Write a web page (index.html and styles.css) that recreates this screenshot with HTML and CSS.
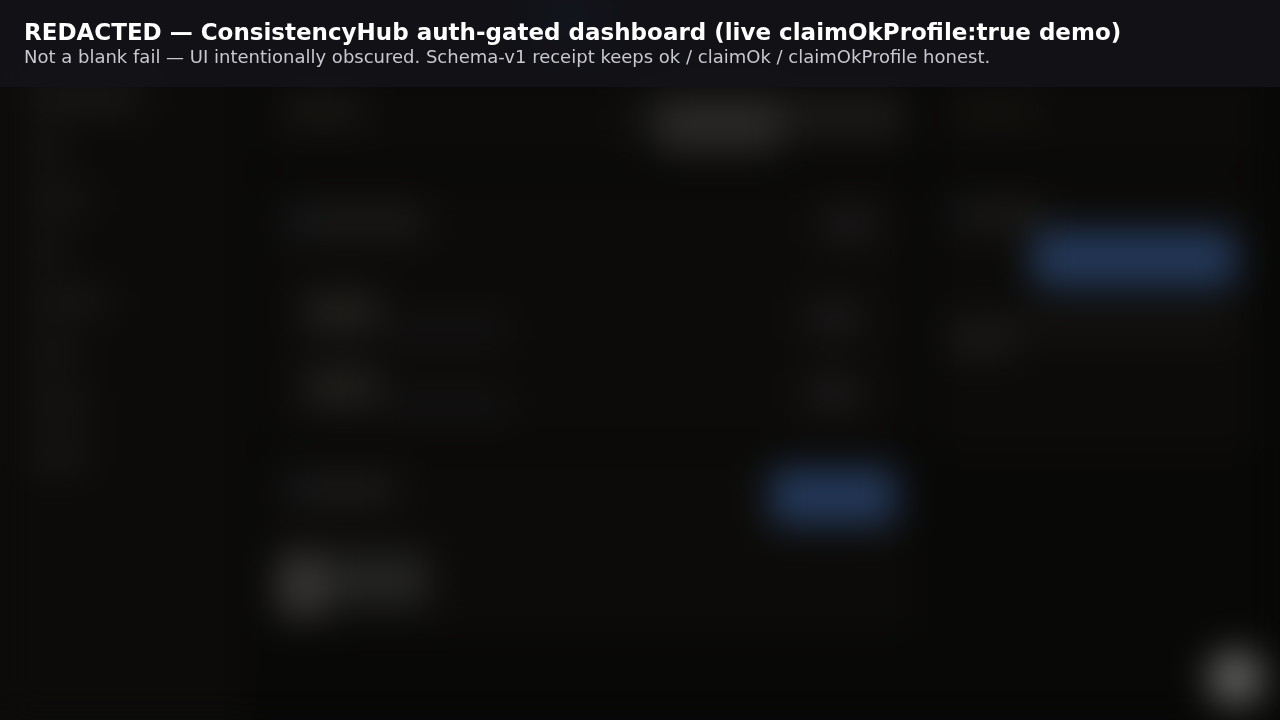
FILE: index.html
```html
<!DOCTYPE html>
<html lang="en">
<head>
<meta charset="utf-8">
<meta name="viewport" content="width=device-width, initial-scale=1">
<title>ConsistencyHub</title>
<link rel="stylesheet" href="styles.css">
</head>
<body>
<header class="banner">
  <h1 class="banner-title">REDACTED — ConsistencyHub auth-gated dashboard (live claimOkProfile:true demo)</h1>
  <p class="banner-note">Not a blank fail — UI intentionally obscured. Schema-v1 receipt keeps ok / claimOk / claimOkProfile honest.</p>
</header>
<div class="dashboard" aria-hidden="true" inert>
  <aside class="sidebar">
    <span class="bar brand"></span>
    <span class="bar w-s"></span>
    <span class="bar w-l"></span>
    <span class="bar w-s"></span>
    <span class="bar w-xl"></span>
    <span class="bar w-m"></span>
    <span class="bar w-l"></span>
    <span class="bar w-l"></span>
  </aside>
  <main class="main">
    <div class="topbar"><span class="spark"></span></div>
    <div class="columns">
      <div class="column">
        <section class="card summary">
          <span class="bar label"></span>
          <div class="stat"><span class="stat-lead"></span><span class="stat-main"></span><span class="stat-side"></span></div>
        </section>
        <section class="card list">
          <div class="row heading-row"><span class="heading"></span><span class="tag"></span></div>
          <div class="row item"><span class="name"></span><span class="detail"></span><span class="tag"></span></div>
          <div class="row item"><span class="name"></span><span class="detail"></span><span class="tag"></span></div>
        </section>
        <section class="card progress">
          <div class="row"><span class="heading heading-short"></span><button class="action" type="button"></button></div>
          <div class="tiles"><span class="tile"></span><span class="tile-text"></span></div>
        </section>
      </div>
      <div class="column">
        <section class="card summary"><span class="bar label-dim"></span></section>
        <section class="card panel">
          <span class="heading panel-heading"></span>
          <button class="action action-wide" type="button"></button>
          <div class="copy"><span class="line"></span><span class="line line-short"></span></div>
        </section>
      </div>
    </div>
  </main>
  <button class="fab" type="button"></button>
</div>
</body>
</html>
```
FILE: styles.css
```css
* { box-sizing: border-box; }
body {
  margin: 0;
  background: linear-gradient(90deg, #0c0b09 224px, #080807 256px) #080807;
  font-family: "DejaVu Sans", sans-serif;
}
.banner {
  position: fixed;
  z-index: 2;
  top: 0;
  left: 0;
  right: 0;
  padding: 18px 24px;
  background: rgba(19, 19, 24, 0.9);
}
.banner-title {
  margin: 0;
  color: #fff;
  font-size: 23px;
  line-height: 28px;
  font-weight: 700;
}
.banner-note {
  margin: 0;
  padding-bottom: 1px;
  color: #c8c8d0;
  font-size: 18px;
  line-height: 22px;
}
.dashboard {
  display: grid;
  grid-template-columns: 240px minmax(0, 1fr);
  min-height: 100vh;
  overflow: hidden;
  background: linear-gradient(90deg, #0c0b09 236px, #080807 244px);
  filter: blur(18px);
}
.sidebar {
  display: flex;
  flex-direction: column;
  gap: 23px;
  padding: 84px 28px 0;
}
.bar { height: 28px; background: #181715; }
.brand { width: 112px; background: #1a1917; }
.w-s { width: 36px; }
.w-m { width: 48px; }
.w-l { width: 60px; }
.w-xl { width: 80px; }
.main { padding: 0 24px; }
.topbar { display: flex; justify-content: center; height: 80px; padding-right: 380px; }
.spark { width: 48px; height: 36px; background: #1c3c70; }
.columns {
  display: grid;
  grid-template-columns: minmax(0, 1fr) 320px;
  gap: 24px;
}
.card { background: #0c0b09; border-radius: 12px; }
.summary {
  display: flex;
  justify-content: space-between;
  align-items: flex-start;
  height: 80px;
  margin-bottom: 24px;
  padding: 16px 8px 0 20px;
}
.label { width: 80px; background: #191815; }
.label-dim { width: 80px; background: #141310; }
.stat { display: flex; align-items: flex-start; }
.stat-lead { width: 32px; height: 40px; background: #121210; }
.stat-main { width: 124px; height: 56px; background: #292827; }
.stat-side { width: 124px; height: 40px; background: #1b1a18; }
.row { display: flex; justify-content: space-between; align-items: flex-start; }
.list { height: 256px; margin-bottom: 16px; padding: 20px 32px 0 20px; }
.heading { width: 140px; height: 34px; background: linear-gradient(90deg, #15171a 10%, #1b1917 40%); }
.heading-short { width: 112px; margin-top: 4px; }
.tag { width: 60px; height: 40px; background: #191717; }
.heading-row { height: 88px; }
.item { height: 75px; padding: 0 16px 0 20px; }
.item .tag { margin-top: 6px; }
.name { width: 76px; height: 40px; background: #201f1c; }
.detail { width: 120px; height: 28px; margin: 24px auto 0 8px; background: #141314; }
.progress { height: 176px; padding: 12px 16px 0 20px; }
.action { width: 126px; height: 57px; padding: 0; border: 0; border-radius: 8px; background: #233859; }
.tiles { display: flex; gap: 2px; margin: 28px -6px; }
.tile { width: 48px; height: 64px; background: #363533; }
.tile-text { width: 100px; height: 54px; background: #242422; }
.panel {
  display: flex;
  flex-direction: column;
  height: 268px;
  padding: 16px 20px 0 12px;
}
.panel-heading { width: 96px; height: 30px; }
.action-wide { width: 204px; align-self: flex-end; }
.copy { padding-top: 28px; }
.line { display: block; height: 20px; background: #161513; }
.line-short { width: 68px; background: #1c1b19; }
.fab {
  position: fixed;
  right: 16px;
  bottom: 14px;
  width: 56px;
  height: 56px;
  border: 0;
  border-radius: 50%;
  background: #626261;
}
```
